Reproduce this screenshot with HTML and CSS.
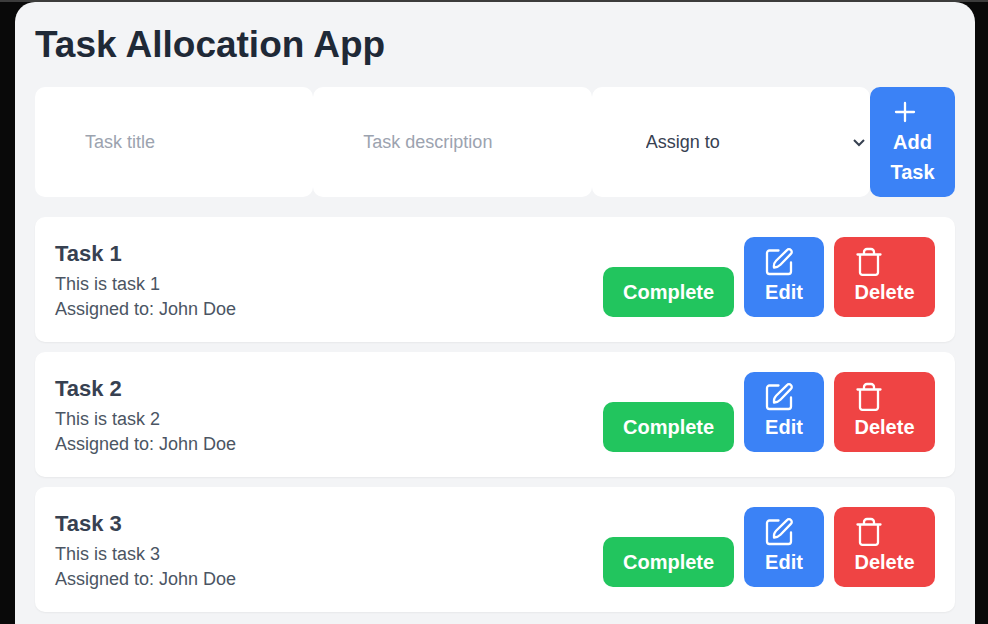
FILE: index.html
```html
<!DOCTYPE html>
<html lang="en">
<head>
  <meta charset="utf-8">
  <meta name="viewport" content="width=device-width, initial-scale=1">
  <title>Task Allocation App</title>
  <link rel="stylesheet" href="styles.css">
</head>
<body>
  <svg class="sprite" aria-hidden="true">
    <symbol id="icon-plus" viewBox="0 0 30 30">
      <path d="M15 6v18M6 15h18"/>
    </symbol>
    <symbol id="icon-edit" viewBox="0 0 30 30">
      <path d="M14.500 3.500H5.500a2.500 2.500 0 0 0-2.500 2.500V24.500a2.500 2.500 0 0 0 2.500 2.500H24.500a2.500 2.500 0 0 0 2.500-2.500V15.500"/>
      <path d="M10 20.500c-.4-2.800.3-4.900 2.100-6.700L23 3.100a2.500 2.500 0 0 1 3.900 0a2.500 2.500 0 0 1 0 3.800L16.400 17.800c-1.800 1.800-3.600 2.800-6.400 2.700z"/>
    </symbol>
    <symbol id="icon-trash" viewBox="0 0 30 30">
      <path d="M3.500 7.500h23M6 7.500v18a2.300 2.300 0 0 0 2.300 2.300h13.400a2.300 2.300 0 0 0 2.300-2.300v-18M10 7.500V5a3 3 0 0 1 3-3h4a3 3 0 0 1 3 3v2.500"/>
    </symbol>
  </svg>

  <main class="app">
    <h1 class="app-title">Task Allocation App</h1>

    <form class="task-form">
      <input class="field" type="text" placeholder="Task title" aria-label="Task title">
      <input class="field" type="text" placeholder="Task description" aria-label="Task description">
      <div class="select-wrap">
        <select class="field field-select" aria-label="Assign to">
          <option>Assign to</option>
          <option>John Doe</option>
        </select>
        <svg class="chevron" viewBox="0 0 12 8" aria-hidden="true"><path d="M1 1l5 5l5-5"/></svg>
      </div>
      <button class="btn btn-blue" type="button"><svg class="icon" aria-hidden="true"><use href="#icon-plus"/></svg>Add Task</button>
    </form>

    <ul class="task-list">
      <li class="task">
        <div class="task-info">
          <h2 class="task-title">Task 1</h2>
          <p>This is task 1</p>
          <p>Assigned to: John Doe</p>
        </div>
        <div class="actions">
          <button class="btn btn-green" type="button">Complete</button>
          <button class="btn btn-blue" type="button"><svg class="icon" aria-hidden="true"><use href="#icon-edit"/></svg>Edit</button>
          <button class="btn btn-red" type="button"><svg class="icon" aria-hidden="true"><use href="#icon-trash"/></svg>Delete</button>
        </div>
      </li>
      <li class="task">
        <div class="task-info">
          <h2 class="task-title">Task 2</h2>
          <p>This is task 2</p>
          <p>Assigned to: John Doe</p>
        </div>
        <div class="actions">
          <button class="btn btn-green" type="button">Complete</button>
          <button class="btn btn-blue" type="button"><svg class="icon" aria-hidden="true"><use href="#icon-edit"/></svg>Edit</button>
          <button class="btn btn-red" type="button"><svg class="icon" aria-hidden="true"><use href="#icon-trash"/></svg>Delete</button>
        </div>
      </li>
      <li class="task">
        <div class="task-info">
          <h2 class="task-title">Task 3</h2>
          <p>This is task 3</p>
          <p>Assigned to: John Doe</p>
        </div>
        <div class="actions">
          <button class="btn btn-green" type="button">Complete</button>
          <button class="btn btn-blue" type="button"><svg class="icon" aria-hidden="true"><use href="#icon-edit"/></svg>Edit</button>
          <button class="btn btn-red" type="button"><svg class="icon" aria-hidden="true"><use href="#icon-trash"/></svg>Delete</button>
        </div>
      </li>
    </ul>
  </main>
</body>
</html>
```

FILE: styles.css
```css
* {
  box-sizing: border-box;
  margin: 0;
  padding: 0;
}

body {
  min-height: 100vh;
  padding: 0 13px 0 15px;
  border-top: 2px solid #3c3c3c;
  background: #090909;
  color: #4b5563;
  font: 18px/25px "Liberation Sans", Arial, sans-serif;
}

.sprite {
  display: none;
}

.sprite path {
  stroke-width: 2.3;
}

.app {
  min-height: calc(100vh - 2px);
  padding: 20px;
  border-radius: 20px 20px 0 0;
  background: #f3f4f6;
}

.app-title {
  margin-bottom: 20px;
  color: #1f2937;
  font-size: 37px;
  line-height: 45px;
}

.task-form {
  display: grid;
  grid-template-columns: repeat(3, 1fr) 85px;
  margin-bottom: 20px;
}

.field {
  width: 100%;
  min-width: 0;
  padding: 0 50px;
  border: 0;
  border-radius: 10px;
  background: #fff;
  color: #374151;
  font: inherit;
}

.field::placeholder {
  color: #9ca3af;
}

.select-wrap {
  display: flex;
  position: relative;
}

.field-select {
  padding: 0 54px;
  appearance: none;
}

.chevron {
  position: absolute;
  top: 52px;
  right: 5px;
  width: 12px;
  height: 8px;
  fill: none;
  stroke: #374151;
  stroke-width: 2;
  pointer-events: none;
}

.btn {
  padding: 10px 20px;
  border: 0;
  border-radius: 10px;
  color: #fff;
  font: bold 20px/30px "Liberation Sans", Arial, sans-serif;
  cursor: pointer;
}

.btn-blue {
  background: #3b82f6;
}

.btn-green {
  background: #22c55e;
}

.btn-red {
  background: #ef4444;
}

.icon {
  display: block;
  width: 30px;
  height: 30px;
  fill: none;
  stroke: currentColor;
  stroke-linecap: round;
  stroke-linejoin: round;
}

.task-list {
  display: grid;
  gap: 10px;
  list-style: none;
}

.task {
  display: flex;
  align-items: flex-start;
  justify-content: space-between;
  padding: 20px;
  border-radius: 10px;
  background: #fff;
  box-shadow: 0 1px 2px rgba(0, 0, 0, 0.05);
}

.task-title {
  margin-bottom: 2px;
  color: #374151;
  font-size: 22px;
  line-height: 33px;
}

.actions {
  display: grid;
  grid-template-columns: 131px 80px 101px;
  align-items: end;
  gap: 10px;
}
```
